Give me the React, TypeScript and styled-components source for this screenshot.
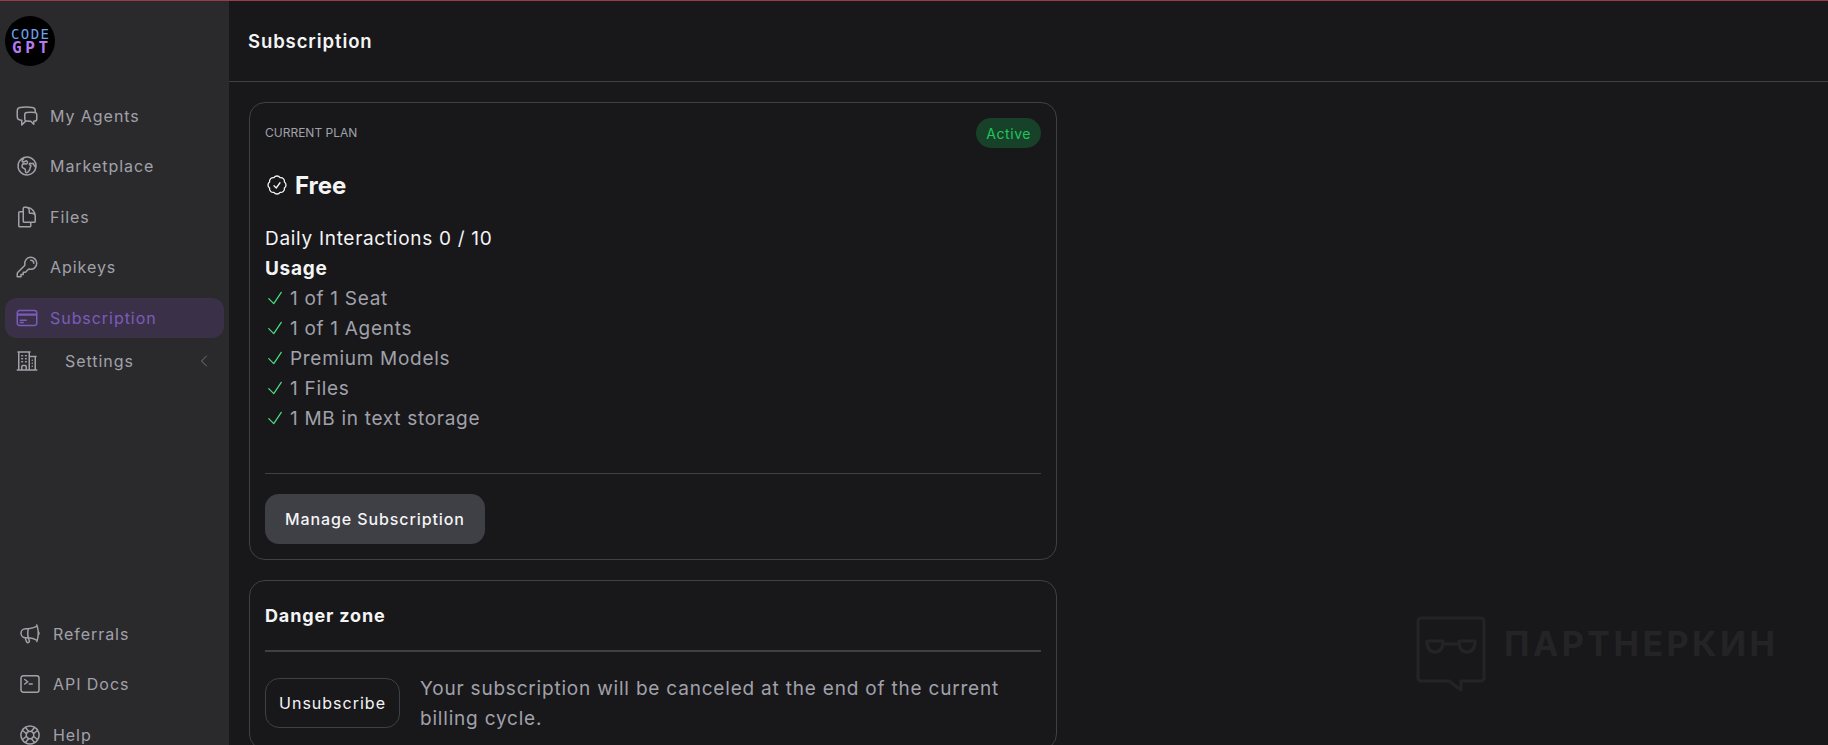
import React from "react";
import styled, { createGlobalStyle } from "styled-components";
import {
  HiOutlineChatBubbleLeftRight,
  HiOutlineGlobeEuropeAfrica,
  HiOutlineDocumentDuplicate,
  HiOutlineKey,
  HiOutlineCreditCard,
  HiOutlineBuildingOffice2,
  HiOutlineChevronLeft,
  HiOutlineMegaphone,
  HiOutlineCommandLine,
  HiOutlineLifebuoy,
  HiOutlineCheckBadge,
  HiOutlineCheck,
} from "react-icons/hi2";

const GlobalStyle = createGlobalStyle`
  html, body {
    margin: 0;
    padding: 0;
    height: 745px;
    overflow: hidden;
    background: #18181b;
    font-family: Inter, "Liberation Sans", sans-serif;
  }
  * { box-sizing: border-box; }
`;

const Page = styled.div`
  position: relative;
  height: 745px;
  overflow: hidden;
  display: flex;
  border-top: 1px solid #9b3a4a;
`;

const Sidebar = styled.aside`
  width: 229px;
  flex-shrink: 0;
  background: #2a2a2c;
  padding: 15px 5px 0;
  display: flex;
  flex-direction: column;
`;

const Logo = styled.div`
  width: 50px;
  height: 50px;
  flex-shrink: 0;
  border-radius: 50%;
  background: #000;
  display: flex;
  flex-direction: column;
  align-items: center;
  justify-content: center;
  font-family: "DejaVu Sans Mono", monospace;
  margin-bottom: 30px;
`;

const LogoTop = styled.span`
  color: #6ea2ee;
  font-size: 14px;
  line-height: 13px;
  letter-spacing: 1.4px;
  margin-right: -1.4px;
`;

const LogoBottom = styled.span`
  color: #b57bee;
  font-size: 16px;
  font-weight: 700;
  line-height: 13px;
  letter-spacing: 3.6px;
  margin-right: -3.6px;
`;

const NavItem = styled.div<{ $active?: boolean; $gap?: number; $inset?: number }>`
  height: 40px;
  flex-shrink: 0;
  margin-bottom: 10.4px;
  padding-left: ${(p) => p.$inset ?? 10}px;
  display: flex;
  align-items: center;
  gap: ${(p) => p.$gap ?? 11}px;
  border-radius: 12px;
  font-size: 16px;
  letter-spacing: 0.95px;
  color: ${(p) => (p.$active ? "#7a5cb8" : "#a1a1aa")};
  background: ${(p) => (p.$active ? "#3a3149" : "transparent")};

  svg {
    width: 24px;
    height: 24px;
    flex-shrink: 0;
  }
`;

const SettingsItem = styled(NavItem)`
  height: 28px;
  margin-top: -1px;
  margin-bottom: 0;
  padding-right: 12px;
`;

const Chevron = styled.span`
  margin-left: auto;
  display: flex;
  color: #71717a;

  svg {
    width: 16px;
    height: 16px;
  }
`;

const BottomNav = styled.div`
  margin-top: 239px;
  flex-shrink: 0;
`;

const Main = styled.main`
  flex: 1;
  min-width: 0;
`;

const Header = styled.header`
  height: 81px;
  padding-left: 19px;
  display: flex;
  align-items: center;
  border-bottom: 1px solid #3f3f46;
  color: #f4f4f5;
  font-size: 18.5px;
  font-weight: 600;
  letter-spacing: 0.9px;
`;

const Content = styled.div`
  width: 808px;
  margin-left: 20px;
  padding-top: 20px;
  display: flex;
  flex-direction: column;
  gap: 20px;
`;

const Card = styled.section`
  border: 1px solid #3f3f46;
  border-radius: 16px;
  padding: 15px;
`;

const CardTop = styled.div`
  display: flex;
  align-items: center;
  justify-content: space-between;
  height: 30px;
`;

const Eyebrow = styled.span`
  font-size: 12px;
  color: #a1a1aa;
  margin-top: -2px;
`;

const Badge = styled.span`
  height: 30px;
  padding: 0 10px;
  display: flex;
  align-items: center;
  border-radius: 15px;
  background: #174129;
  color: #22c55e;
  font-size: 14px;
  letter-spacing: 0.55px;
`;

const PlanName = styled.div`
  display: flex;
  align-items: center;
  gap: 6px;
  margin: 21px 0 22px;
  height: 32px;
  color: #f4f4f5;
  font-size: 24px;
  font-weight: 700;

  svg {
    width: 24px;
    height: 24px;
    stroke-width: 1.3;
  }
`;

const Line = styled.div<{ $bold?: boolean }>`
  height: 30px;
  display: flex;
  align-items: center;
  font-size: 19px;
  letter-spacing: 0.7px;
  color: #f4f4f5;
  font-weight: ${(p) => (p.$bold ? 700 : 400)};
`;

const Feature = styled(Line)`
  color: #a1a1aa;
  gap: 5px;

  svg {
    width: 20px;
    height: 20px;
    color: #4ade80;
    flex-shrink: 0;
  }
`;

const Divider = styled.hr`
  border: 0;
  border-top: 1px solid #3f3f46;
  margin: 40px 0 20px;
`;

const Button = styled.button`
  height: 50px;
  padding: 0 20px;
  border: 0;
  border-radius: 14px;
  background: #3f3f46;
  color: #f4f4f5;
  font-family: inherit;
  font-size: 16px;
  font-weight: 500;
  letter-spacing: 0.9px;
`;

const DangerTitle = styled.h2`
  margin: 8px 0 22px;
  color: #f4f4f5;
  font-size: 18px;
  font-weight: 700;
  line-height: 24px;
  letter-spacing: 0.85px;
`;

const DangerDivider = styled.hr`
  border: 0;
  border-top: 2px solid #3f3f46;
  margin: 0 0 26px;
`;

const DangerRow = styled.div`
  display: flex;
  gap: 20px;
  align-items: flex-start;
`;

const OutlineButton = styled.button`
  height: 50px;
  width: 135px;
  flex-shrink: 0;
  border: 1px solid #3f3f46;
  border-radius: 14px;
  background: transparent;
  color: #f4f4f5;
  font-family: inherit;
  font-size: 16px;
  letter-spacing: 1px;
`;

const DangerText = styled.p`
  margin: -4px 0 0;
  color: #a1a1aa;
  font-size: 19px;
  letter-spacing: 0.8px;
  line-height: 30px;
  max-width: 600px;
`;

const Watermark = styled.div`
  position: absolute;
  left: 1416px;
  top: 615px;
  display: flex;
  align-items: flex-start;
  gap: 18px;
  color: #242426;
  pointer-events: none;

  svg {
    width: 70px;
    height: 77px;
  }
`;

const WatermarkText = styled.span`
  margin-top: 8px;
  font-family: Inter, sans-serif;
  font-size: 34px;
  font-weight: 700;
  line-height: 40px;
  letter-spacing: 3.5px;
`;

const topNav = [
  { label: "My Agents", Icon: HiOutlineChatBubbleLeftRight },
  { label: "Marketplace", Icon: HiOutlineGlobeEuropeAfrica },
  { label: "Files", Icon: HiOutlineDocumentDuplicate },
  { label: "Apikeys", Icon: HiOutlineKey },
  { label: "Subscription", Icon: HiOutlineCreditCard, active: true },
];

const bottomNav = [
  { label: "Referrals", Icon: HiOutlineMegaphone },
  { label: "API Docs", Icon: HiOutlineCommandLine },
  { label: "Help", Icon: HiOutlineLifebuoy },
];

const features = ["1 of 1 Seat", "1 of 1 Agents", "Premium Models", "1 Files", "1 MB in text storage"];

export default function App() {
  return (
    <Page>
      <GlobalStyle />
      <Sidebar>
        <Logo>
          <LogoTop>CODE</LogoTop>
          <LogoBottom>GPT</LogoBottom>
        </Logo>
        {topNav.map(({ label, Icon, active }) => (
          <NavItem key={label} $active={active}>
            <Icon />
            {label}
          </NavItem>
        ))}
        <SettingsItem $gap={26}>
          <HiOutlineBuildingOffice2 />
          Settings
          <Chevron>
            <HiOutlineChevronLeft />
          </Chevron>
        </SettingsItem>
        <BottomNav>
          {bottomNav.map(({ label, Icon }) => (
            <NavItem key={label} $inset={13}>
              <Icon />
              {label}
            </NavItem>
          ))}
        </BottomNav>
      </Sidebar>
      <Main>
        <Header>Subscription</Header>
        <Content>
          <Card>
            <CardTop>
              <Eyebrow>CURRENT PLAN</Eyebrow>
              <Badge>Active</Badge>
            </CardTop>
            <PlanName>
              <HiOutlineCheckBadge />
              Free
            </PlanName>
            <Line>Daily Interactions 0 / 10</Line>
            <Line $bold>Usage</Line>
            {features.map((f) => (
              <Feature key={f}>
                <HiOutlineCheck />
                {f}
              </Feature>
            ))}
            <Divider />
            <Button>Manage Subscription</Button>
          </Card>
          <Card>
            <DangerTitle>Danger zone</DangerTitle>
            <DangerDivider />
            <DangerRow>
              <OutlineButton>Unsubscribe</OutlineButton>
              <DangerText>Your subscription will be canceled at the end of the current billing cycle.</DangerText>
            </DangerRow>
          </Card>
        </Content>
      </Main>
      <Watermark>
        <svg viewBox="0 0 70 77" fill="none" stroke="currentColor" strokeWidth="3.2" strokeLinecap="round" strokeLinejoin="round">
          <path d="M5 2h60a3 3 0 0 1 3 3v57a3 3 0 0 1-3 3H45v9L33 65H5a3 3 0 0 1-3-3V5a3 3 0 0 1 3-3z" />
          <path d="M11 25h16c0 8-3 11-8 11s-8-3-8-11zM43 25h16c0 8-3 11-8 11s-8-3-8-11zM27 28h16" />
        </svg>
        <WatermarkText>ПАРТНЕРКИН</WatermarkText>
      </Watermark>
    </Page>
  );
}
